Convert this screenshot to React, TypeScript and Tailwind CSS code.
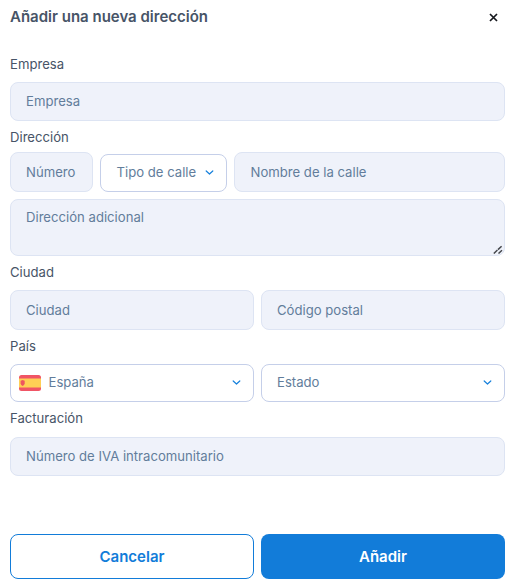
import type { ReactNode } from "react";

const field =
  "block w-full rounded-lg border border-[#dde4f3] bg-[#eff2fa] px-[15px] text-[13.14px] leading-5 text-[#627d9b] placeholder:text-[#627d9b] placeholder:opacity-100 outline-none";

function Label({ children }: { children: ReactNode }) {
  return <label className="block h-5 text-[13.14px] leading-5 text-[#475467]">{children}</label>;
}

function Chevron() {
  return (
    <svg className="mt-[2px] h-[6px] w-[9px] shrink-0" viewBox="0 0 9 6" fill="none">
      <path d="M1.2 1 L4.5 4 L7.8 1" stroke="#1680dc" strokeWidth="1.2" strokeLinecap="round" strokeLinejoin="round" />
    </svg>
  );
}

function SpainFlag() {
  return (
    <svg className="mt-[2px] h-4 w-[22px] shrink-0" viewBox="0 0 22 16">
      <rect width="22" height="16" rx="2.5" fill="#f05565" />
      <rect y="3.5" width="22" height="9" fill="#ffcf55" />
      <path d="M1.6 5.8 L3.6 5 L5.7 5.8 V8.6 Q5.4 10.2 3.6 11 Q1.9 10.2 1.6 8.6 Z" fill="#ee5560" />
    </svg>
  );
}

function Select({ children, className }: { children: ReactNode; className: string }) {
  return (
    <button
      type="button"
      className={`flex h-[38px] items-center justify-between rounded-lg border border-[#c5cfe9] bg-white pb-[2px] text-[13.14px] leading-5 text-[#627d9b] ${className}`}
    >
      {children}
      <Chevron />
    </button>
  );
}

export default function App() {
  return (
    <div className="h-[584px] w-[511px] bg-white pr-[6px] pl-[10px] font-['Inter',sans-serif]">
      <header className="flex h-[54px] items-start justify-between pt-[6px] pr-[7px]">
        <h2 className="text-[15px] leading-[21px] font-semibold text-[#475467]">Añadir una nueva dirección</h2>
        <button type="button" aria-label="Cerrar" className="mt-[7px]">
          <svg className="h-[9px] w-[9px]" viewBox="0 0 9 9" fill="none">
            <path d="M1 1 L8 8 M8 1 L1 8" stroke="#16181d" strokeWidth="1.7" />
          </svg>
        </button>
      </header>

      <Label>Empresa</Label>
      <input className={`${field} mt-2 h-[39px] pb-px`} placeholder="Empresa" />

      <div className="mt-[6px]">
        <Label>Dirección</Label>
        <div className="mt-[5px] flex items-end gap-[7px]">
          <div className="w-[83px]">
            <input className={`${field} h-10`} placeholder="Número" />
          </div>
          <Select className="w-[127px] pr-3 pl-[15.5px]">
            <span>Tipo de calle</span>
          </Select>
          <div className="flex-1">
            <input className={`${field} h-10 pl-[15.5px]`} placeholder="Nombre de la calle" />
          </div>
        </div>
        <div className="relative mt-[7px]">
          <textarea className={`${field} h-[57px] resize-none pt-[7px]`} placeholder="Dirección adicional" />
          <svg className="absolute right-[2px] bottom-[2px] h-[9px] w-[10px]" viewBox="0 0 10 9" fill="none">
            <path d="M0.8 8.5 L9 0.8 M5.5 8.5 L9 5.2" stroke="#45484d" strokeWidth="1.5" strokeDasharray="5 0.7" />
          </svg>
        </div>
      </div>

      <div className="mt-[6px]">
        <Label>Ciudad</Label>
        <div className="mt-2 grid grid-cols-2 gap-[7px]">
          <input className={`${field} h-10`} placeholder="Ciudad" />
          <input className={`${field} h-10`} placeholder="Código postal" />
        </div>
      </div>

      <div className="mt-[6px]">
        <Label>País</Label>
        <div className="mt-2 grid grid-cols-2 gap-[7px]">
          <Select className="pr-[12.5px] pl-2">
            <span className="flex items-center gap-[7.5px]">
              <SpainFlag />
              España
            </span>
          </Select>
          <Select className="pr-[12.5px] pl-[15px]">
            <span>Estado</span>
          </Select>
        </div>
      </div>

      <div className="mt-[6px]">
        <Label>Facturación</Label>
        <input className={`${field} mt-[9px] h-[39px] pb-px`} placeholder="Número de IVA intracomunitario" />
      </div>

      <footer className="mt-[58px] grid grid-cols-2 gap-[7px]">
        <button type="button" className="h-[45px] rounded-lg border border-[#127cd9] bg-white pt-px text-[15px] font-semibold text-[#127cd9]">
          Cancelar
        </button>
        <button type="button" className="h-[45px] rounded-lg bg-[#127cd9] pt-px text-[15px] font-semibold text-white">
          Añadir
        </button>
      </footer>
    </div>
  );
}
